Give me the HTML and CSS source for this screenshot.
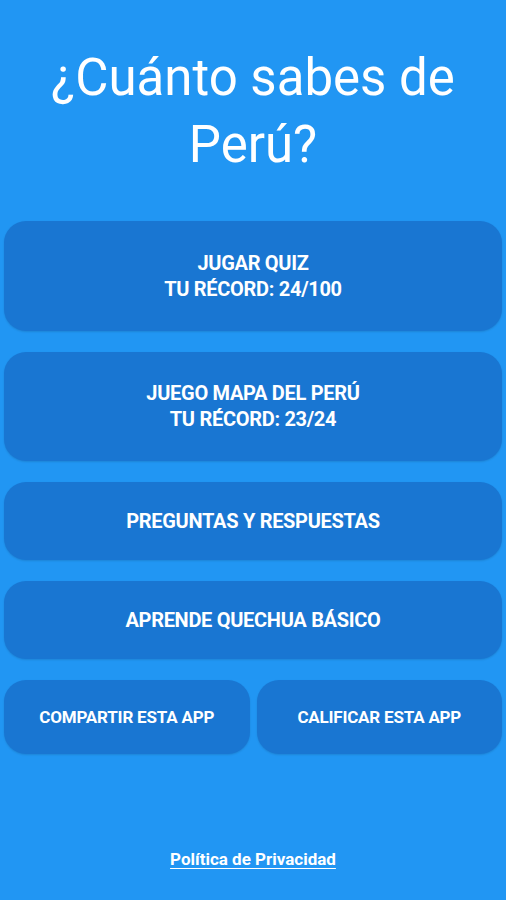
FILE: index.html
```html
<!DOCTYPE html>
<html lang="es">
<head>
<meta charset="utf-8">
<title>¿Cuánto sabes de Perú?</title>
<link rel="stylesheet" href="styles.css">
</head>
<body>
<main class="screen">
  <h1 class="title">¿Cuánto sabes de<br>Perú?</h1>
  <nav class="menu">
    <a class="btn btn-tall" href="#">JUGAR QUIZ<br>TU RÉCORD: 24/100</a>
    <a class="btn btn-tall" href="#">JUEGO MAPA DEL PERÚ<br>TU RÉCORD: 23/24</a>
    <a class="btn btn-mid" href="#">PREGUNTAS Y RESPUESTAS</a>
    <a class="btn btn-mid" href="#">APRENDE QUECHUA BÁSICO</a>
    <div class="row">
      <a class="btn btn-small" href="#">COMPARTIR ESTA APP</a>
      <a class="btn btn-small" href="#">CALIFICAR ESTA APP</a>
    </div>
  </nav>
  <footer class="footer">
    <a class="privacy" href="#">Política de Privacidad</a>
  </footer>
</main>
</body>
</html>
```

FILE: styles.css
```css
html, body {
  margin: 0;
  padding: 0;
  background: #2196f3;
}

body {
  font-family: Roboto, "Noto Sans", "Liberation Sans", sans-serif;
  color: #ffffff;
}

.screen {
  min-height: 900px;
  box-sizing: border-box;
  padding: 44px 4px 31px 4px;
  display: flex;
  flex-direction: column;
}

.title {
  margin: 0;
  font-size: 51px;
  font-weight: 400;
  line-height: 67px;
  text-align: center;
  color: #ffffff;
}

.menu {
  margin-top: 43px;
  display: flex;
  flex-direction: column;
  gap: 21px;
}

.btn {
  display: flex;
  align-items: center;
  justify-content: center;
  text-align: center;
  background: #1976d2;
  color: #ffffff;
  text-decoration: none;
  font-weight: 700;
  font-size: 20px;
  letter-spacing: -0.3px;
  line-height: 26px;
  border-radius: 22px;
  box-shadow: 0 1px 2px rgba(0, 0, 0, 0.12);
}

.btn-tall {
  height: 109.5px;
}

.btn-mid {
  height: 78px;
}

.row {
  display: grid;
  grid-template-columns: 1fr 1fr;
  gap: 7px;
}

.btn-small {
  height: 74px;
  font-size: 17px;
  letter-spacing: -0.2px;
}

.footer {
  margin-top: auto;
  text-align: center;
}

.privacy {
  color: #ffffff;
  font-weight: 700;
  font-size: 17px;
  line-height: 20px;
  text-decoration: underline;
  text-underline-offset: 3px;
}
```
